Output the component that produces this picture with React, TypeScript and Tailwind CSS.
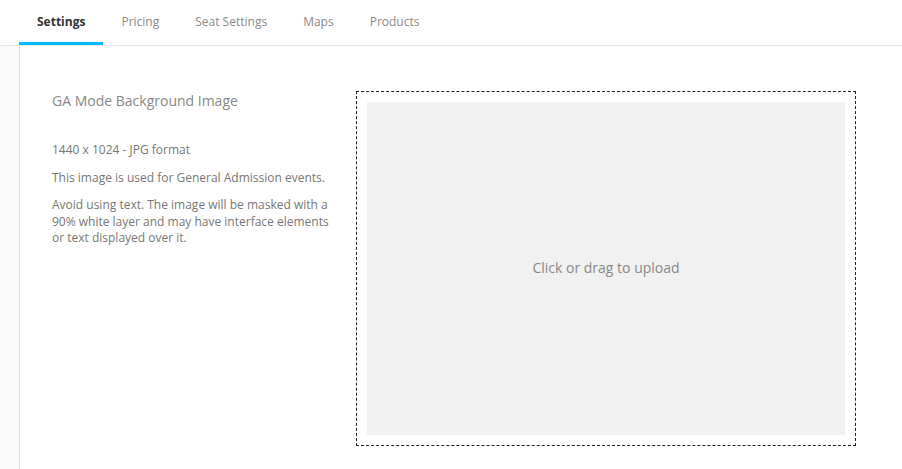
const tabs = ["Settings", "Pricing", "Seat Settings", "Maps", "Products"];

export default function App() {
  return (
    <div
      className="flex h-[469px] w-[902px] flex-col overflow-hidden bg-white text-[#777]"
      style={{ fontFamily: '"Open Sans", sans-serif' }}
    >
      <nav className="flex h-[46px] shrink-0 border-b border-[#e5e5e5] pl-[19px]">
        {tabs.map((tab, i) => (
          <div
            key={tab}
            className={
              i === 0
                ? "flex h-[45px] items-center border-b-[3px] border-[#00b9ff] px-[18px] pt-[1px] text-[12px] font-bold text-[#333]"
                : "flex h-[45px] items-center px-[18px] pt-[1px] pb-[3px] text-[12px] text-[#8a8a8a]"
            }
          >
            {tab}
          </div>
        ))}
      </nav>
      <div className="flex flex-1">
        <aside className="w-[20px] shrink-0 border-r border-[#e2e2e2] bg-[#fafafa]" />
        <main className="flex flex-1 gap-[24px] pl-[32px] pt-[45px]">
          <section className="w-[280px] shrink-0">
            <h2 className="text-[14px] leading-[20px] text-[#888]">GA Mode Background Image</h2>
            <p className="mt-[31px] text-[12px] leading-[16px]">1440 x 1024 - JPG format</p>
            <p className="mt-[12px] text-[12px] leading-[16px]">
              This image is used for General Admission events.
            </p>
            <p className="mt-[11px] text-[12px] leading-[16.5px]">
              Avoid using text. The image will be masked with a 90% white layer and may have
              interface elements or text displayed over it.
            </p>
          </section>
          <div className="h-[355px] w-[500px] shrink-0 border border-dashed border-[#222] p-[10px]">
            <div className="flex h-full w-full items-center justify-center bg-[#f1f1f1] pb-[2px] text-[14px] text-[#888]">
              Click or drag to upload
            </div>
          </div>
        </main>
      </div>
    </div>
  );
}
